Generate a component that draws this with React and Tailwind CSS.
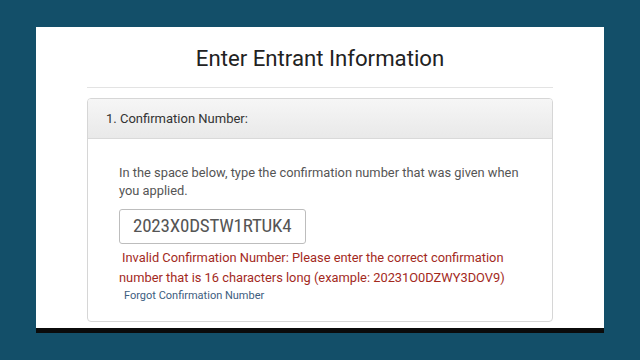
export default function App() {
  return (
    <div className="w-[640px] h-[360px] bg-[#134f69] pt-[27px] px-[36px] font-['Roboto',sans-serif] overflow-hidden">
      {/* White page panel */}
      <div className="bg-white h-[301px] flex flex-col border-b-[5px] border-[#0b0b0b] box-content">
        <h1 className="text-center text-[22.2px] leading-[28px] text-[#222] pt-[17px]">Enter Entrant Information</h1>
        <div className="mx-[51px] mt-[15px] border-t border-[#e3e3e3]" />

        {/* Card */}
        <div className="mx-[51px] mt-[10px] h-[224px] border border-[#d6d6d6] rounded-[4px] flex flex-col overflow-hidden">
          <div className="h-[40px] shrink-0 bg-gradient-to-b from-[#f6f6f6] to-[#e9e9e9] border-b border-[#d9d9d9] flex items-center pl-[18px]">
            <span className="text-[13px] text-[#333]">1. Confirmation Number:</span>
          </div>
          <div className="pl-[31px] pr-[20px] pt-[25px]">
            <p className="text-[12.85px] leading-[18px] text-[#555] w-[410px]">
              In the space below, type the confirmation number that was given when you applied.
            </p>
            <div className="mt-[9px] w-[187px] h-[35px] border border-[#bdbdbd] rounded-[3px] flex items-center pl-[13px]">
              <span className="text-[19px] text-[#555] font-['Liberation_Sans_Narrow','Roboto_Condensed',sans-serif] tracking-[-0.2px]">
                2023X0DSTW1RTUK4
              </span>
            </div>
            <p className="mt-[4px] text-[12.85px] leading-[19.5px] text-[#a3291d] w-[410px]">
              <span className="pl-[3px]">Invalid Confirmation Number: Please enter the correct confirmation</span>
              <br />
              number that is 16 characters long (example: 20231O0DZWY3DOV9)
            </p>
            <a className="block mt-[1px] ml-[5px] text-[11px] leading-[15px] text-[#3d5d80]">Forgot Confirmation Number</a>
          </div>
        </div>
      </div>
    </div>
  );
}
